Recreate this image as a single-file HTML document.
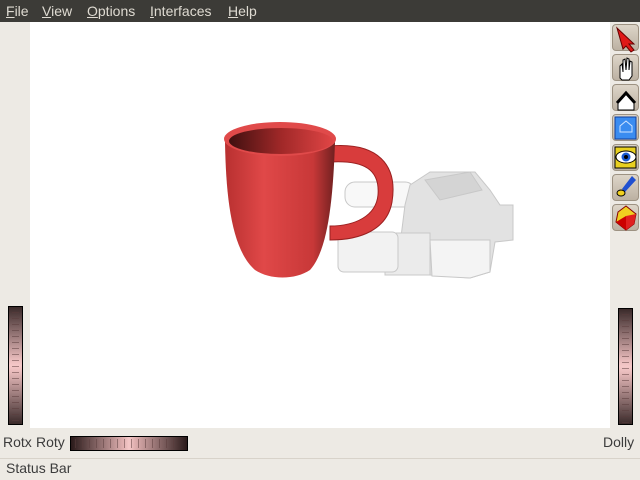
<!DOCTYPE html>
<html><head><meta charset="utf-8"><style>
*{margin:0;padding:0;box-sizing:border-box}
body{width:640px;height:480px;overflow:hidden;background:#edeae4;font-family:"Liberation Sans","DejaVu Sans",sans-serif;position:relative}
.menu{position:absolute;left:0;top:0;width:640px;height:22px;background:#3c3b37;color:#dfdbd2;font-size:14px}
.menu span{position:absolute;top:3px}
.menu u{text-decoration:underline}
.canvas{position:absolute;left:30px;top:22px;width:580px;height:406px;background:#fff}
.vw{position:absolute;width:15px;border:1px solid #000;background:linear-gradient(to bottom,#3a2a2a,#e9bcbc 45%,#f5c8c8 50%,#e9bcbc 55%,#3a2a2a);}
.vw i{display:block;height:1px;background:rgba(90,60,60,.5);margin:5px 3px 0}
.hw{position:absolute;height:15px;border:1px solid #000;background:linear-gradient(to right,#2a1a1a,#e0b0b0 45%,#f5c8c8 50%,#e0b0b0 55%,#2a1a1a);display:flex;padding:2px 4px}
.hw i{width:1px;background:rgba(90,60,60,.5);margin-right:6px}
.btn{position:absolute;left:612px;width:27px;height:27px;border-radius:4px;background:linear-gradient(#ddd5c8,#bcb1a2);border:1px solid #9d9282}
.lbl{position:absolute;font-size:14px;color:#3c3c3c}
</style></head><body>
<div class="menu">
<span style="left:6px"><u>F</u>ile</span>
<span style="left:42px"><u>V</u>iew</span>
<span style="left:87px"><u>O</u>ptions</span>
<span style="left:150px"><u>I</u>nterfaces</span>
<span style="left:228px"><u>H</u>elp</span>
</div>
<div class="canvas"></div>
<svg style="position:absolute;left:0;top:0" width="640" height="480">
<defs>
<linearGradient id="mb" x1="0" x2="1"><stop offset="0" stop-color="#b83030"/><stop offset=".35" stop-color="#e04848"/><stop offset=".8" stop-color="#c83838"/><stop offset="1" stop-color="#702020"/></linearGradient>
<linearGradient id="mi" x1="0" x2="1"><stop offset="0" stop-color="#401010"/><stop offset=".5" stop-color="#a02828"/><stop offset="1" stop-color="#e04545"/></linearGradient>
</defs>
<g fill="#ececec" stroke="#c8c8c8" stroke-width="1">
<rect x="345" y="182" width="70" height="25" rx="10" fill="#f8f8f8"/>
<path d="M410 185 L430 172 L475 172 L490 190 L500 205 L513 205 L513 240 L495 242 L490 272 L470 278 L430 275 L425 250 L400 245 L405 205 Z" fill="#e2e2e2"/>
<path d="M425 180 L470 172 L482 190 L440 200 Z" fill="#d4d4d4"/>
<rect x="385" y="233" width="45" height="42" fill="#ebebeb"/>
<rect x="338" y="232" width="60" height="40" rx="6" fill="#f2f2f2"/>
<path d="M430 240 L490 240 L490 272 L470 278 L432 276 Z" fill="#f4f4f4"/>
</g>
<path d="M330 146 C378 142 398 165 392 202 C387 230 360 240 330 240 L330 226 C355 226 376 216 378 195 C380 170 365 160 330 162 Z" fill="#d83c3c" stroke="#9a2020" stroke-width="1"/>
<path d="M225 142 C226 200 232 250 255 270 C270 280 295 280 310 270 C328 250 333 200 335 142 Z" fill="url(#mb)"/>
<ellipse cx="280" cy="139" rx="56" ry="17" fill="#e04a4a"/>
<ellipse cx="281" cy="141" rx="52" ry="13" fill="url(#mi)"/>
</svg>
<div class="vw" style="left:8px;top:306px;height:119px"><i></i><i></i><i></i><i></i><i></i><i></i><i></i><i></i><i></i><i></i><i></i><i></i><i></i><i></i><i></i><i></i><i></i><i></i><i></i></div>
<div class="vw" style="left:618px;top:308px;height:117px"><i></i><i></i><i></i><i></i><i></i><i></i><i></i><i></i><i></i><i></i><i></i><i></i><i></i><i></i><i></i><i></i><i></i><i></i><i></i></div>
<div class="hw" style="left:70px;top:436px;width:118px"><i></i><i></i><i></i><i></i><i></i><i></i><i></i><i></i><i></i><i></i><i></i><i></i><i></i><i></i><i></i></div>
<div class="lbl" style="left:3px;top:434px">Rotx</div>
<div class="lbl" style="left:36px;top:434px">Roty</div>
<div class="lbl" style="left:603px;top:434px">Dolly</div>
<div style="position:absolute;left:0;top:458px;width:640px;height:1px;background:#d8d3ca"></div>
<div class="lbl" style="left:6px;top:460px">Status Bar</div>
<div class="btn" style="top:24px"></div>
<div class="btn" style="top:54px"></div>
<div class="btn" style="top:84px"></div>
<div class="btn" style="top:114px"></div>
<div class="btn" style="top:144px"></div>
<div class="btn" style="top:174px"></div>
<div class="btn" style="top:204px"></div>
<svg style="position:absolute;left:612px;top:24px" width="28" height="210">
<path d="M5 4 L22 20 L17 20 L22 26 L19 28 L14 22 L11 25 Z" fill="#e01818" stroke="#600" stroke-width="1"/>
<path d="M8 54 L8 42 L10 40 L11 48 L11 36 L13 35 L14 46 L15 34 L17 35 L17 46 L18 37 L20 38 L20 52 L17 56 L10 56 Z" fill="#fff" stroke="#000" stroke-width="1"/>
<path d="M6 78 L14 70 L22 78 L22 86 L6 86 Z" fill="#fff" stroke="#000"/><path d="M5 79 L14 69 L23 79" fill="none" stroke="#000" stroke-width="3"/>
<rect x="3" y="93" width="21" height="22" fill="#3a8cf0" stroke="#1040a0"/><path d="M8 108 L8 102 L14 97 L20 102 L20 108 Z" fill="none" stroke="#cfe4ff"/>
<rect x="3" y="123" width="21" height="21" fill="#e8d020" stroke="#000"/><ellipse cx="14" cy="133" rx="10" ry="6" fill="#fff" stroke="#000"/><circle cx="14" cy="133" r="4.5" fill="#1a5ad0"/><circle cx="14" cy="133" r="2" fill="#000"/>
<path d="M20 152 L24 156 L13 168 L10 165 Z" fill="#2050d0"/><ellipse cx="9" cy="169" rx="4" ry="3" fill="#f0d020" stroke="#000"/>
<path d="M14 182 L24 190 L22 200 L14 206 L4 198 L6 188 Z" fill="#f0d020" stroke="#800"/><path d="M14 192 L24 190 L22 200 L14 206 Z" fill="#e02020"/><path d="M4 198 L14 192 L14 206 Z" fill="#c00"/>
</svg>
</body></html>
